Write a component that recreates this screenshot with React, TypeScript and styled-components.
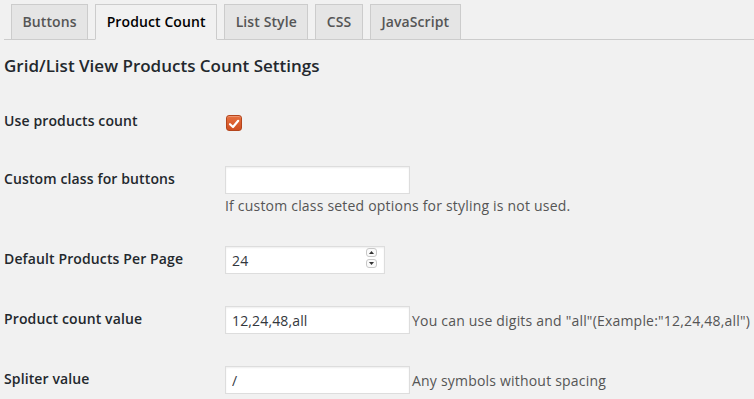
import React from "react";
import styled, { createGlobalStyle } from "styled-components";

const FONT = `"Open Sans", "Noto Sans", "Liberation Sans", sans-serif`;

const Global = createGlobalStyle`
  html, body { margin: 0; padding: 0; background: #f1f1f1; }
  body {
    font-family: ${FONT};
    font-size: 14px;
    color: #444;
    overflow: hidden;
  }
`;

const Page = styled.div`
  padding-left: 4px;
  width: 750px;
  height: 399px;
`;

const TabBar = styled.nav`
  display: flex;
  align-items: flex-end;
  padding-top: 4px;
  border-bottom: 1px solid #ccc;
`;

const Tab = styled.a<{ $active?: boolean }>`
  display: block;
  margin-left: 7px;
  padding: 5px 10.5px;
  font-size: 14px;
  line-height: 24px;
  font-weight: 600;
  letter-spacing: 0.1px;
  text-decoration: none;
  white-space: nowrap;
  border: 1px solid #ccc;
  border-bottom: ${(p) => (p.$active ? "1px solid #f1f1f1" : "none")};
  margin-bottom: ${(p) => (p.$active ? "-1px" : "0")};
  background: ${(p) => (p.$active ? "#f1f1f1" : "#e5e5e5")};
  color: ${(p) => (p.$active ? "#000" : "#555")};
`;

const Heading = styled.h3`
  margin: 14px 0 0;
  font-size: 17px;
  line-height: 24px;
  font-weight: 600;
  color: #23282d;
`;

const Form = styled.div`
  margin-top: 14px;
  display: flex;
  flex-direction: column;
`;

const Row = styled.div`
  display: flex;
  align-items: flex-start;
`;

const Label = styled.div`
  flex: 0 0 200px;
  padding: 20px 10px 20px 0;
  font-size: 14px;
  line-height: 18px;
  font-weight: 600;
  letter-spacing: 0.12px;
  color: #23282d;
`;

const Field = styled.div<{ $inline?: boolean }>`
  flex: 0 0 auto;
  padding: 15px 10px;
  display: flex;
  flex-direction: ${(p) => (p.$inline ? "row" : "column")};
  align-items: ${(p) => (p.$inline ? "center" : "flex-start")};
`;

const TextInput = styled.input<{ $w: number }>`
  flex: 0 0 auto;
  box-sizing: border-box;
  width: ${(p) => p.$w}px;
  height: 28px;
  margin: 1px;
  padding: 3px 6px;
  border: 1px solid #ddd;
  box-shadow: inset 0 1px 2px rgba(0, 0, 0, 0.07);
  background: #fff;
  color: #32373c;
  font-family: ${FONT};
  font-size: 14px;
  letter-spacing: 0.15px;
  outline: none;
`;

const Description = styled.p<{ $inline?: boolean }>`
  flex: 0 0 auto;
  margin: ${(p) => (p.$inline ? "0 0 0 1px" : "1px 0 0 1px")};
  font-size: 14px;
  line-height: 19px;
  letter-spacing: 0.2px;
  color: #555;
  white-space: nowrap;
`;

const CheckBox = styled.span`
  display: block;
  box-sizing: border-box;
  width: 16px;
  height: 16px;
  margin: 8px 0 0 2px;
  border-radius: 3px;
  border: 1px solid #b4451c;
  background: linear-gradient(#e7703f, #cf4f22);
  box-shadow: inset 0 1px 0 rgba(255, 255, 255, 0.25);
`;

const NumberWrap = styled.div`
  position: relative;
`;

const Spinner = styled.div`
  position: absolute;
  right: 9px;
  top: 3px;
  display: flex;
  flex-direction: column;
  gap: 2px;
`;

const SpinButton = styled.span`
  display: flex;
  align-items: center;
  justify-content: center;
  width: 11px;
  height: 9px;
  box-sizing: border-box;
  border: 1px solid #c8c8c8;
  border-radius: 3px;
  background: #fafafa;
`;

const Check = () => (
  <svg width="14" height="14" viewBox="0 0 14 14">
    <path d="M3 7.2 L6 10 L11.2 3.8" fill="none" stroke="#fff" strokeWidth="2.2" strokeLinecap="round" strokeLinejoin="round" />
  </svg>
);

const Arrow = ({ up }: { up?: boolean }) => (
  <svg width="5" height="3" viewBox="0 0 5 3">
    <path d={up ? "M0 3 L2.5 0 L5 3 Z" : "M0 0 L2.5 3 L5 0 Z"} fill="#333" />
  </svg>
);

export default function App() {
  return (
    <Page>
      <Global />
      <TabBar>
        <Tab>Buttons</Tab>
        <Tab $active>Product Count</Tab>
        <Tab>List Style</Tab>
        <Tab>CSS</Tab>
        <Tab>JavaScript</Tab>
      </TabBar>
      <Heading>Grid/List View Products Count Settings</Heading>
      <Form>
        <Row>
          <Label>Use products count</Label>
          <Field>
            <CheckBox>
              <Check />
            </CheckBox>
          </Field>
        </Row>
        <Row>
          <Label>Custom class for buttons</Label>
          <Field>
            <TextInput $w={185} defaultValue="" />
            <Description>If custom class seted options for styling is not used.</Description>
          </Field>
        </Row>
        <Row>
          <Label>Default Products Per Page</Label>
          <Field>
            <NumberWrap>
              <TextInput $w={160} defaultValue="24" />
              <Spinner>
                <SpinButton>
                  <Arrow up />
                </SpinButton>
                <SpinButton>
                  <Arrow />
                </SpinButton>
              </Spinner>
            </NumberWrap>
          </Field>
        </Row>
        <Row>
          <Label>Product count value</Label>
          <Field $inline>
            <TextInput $w={185} defaultValue="12,24,48,all" />
            <Description $inline>You can use digits and "all"(Example:"12,24,48,all")</Description>
          </Field>
        </Row>
        <Row>
          <Label>Spliter value</Label>
          <Field $inline>
            <TextInput $w={185} defaultValue="/" />
            <Description $inline>Any symbols without spacing</Description>
          </Field>
        </Row>
      </Form>
    </Page>
  );
}
